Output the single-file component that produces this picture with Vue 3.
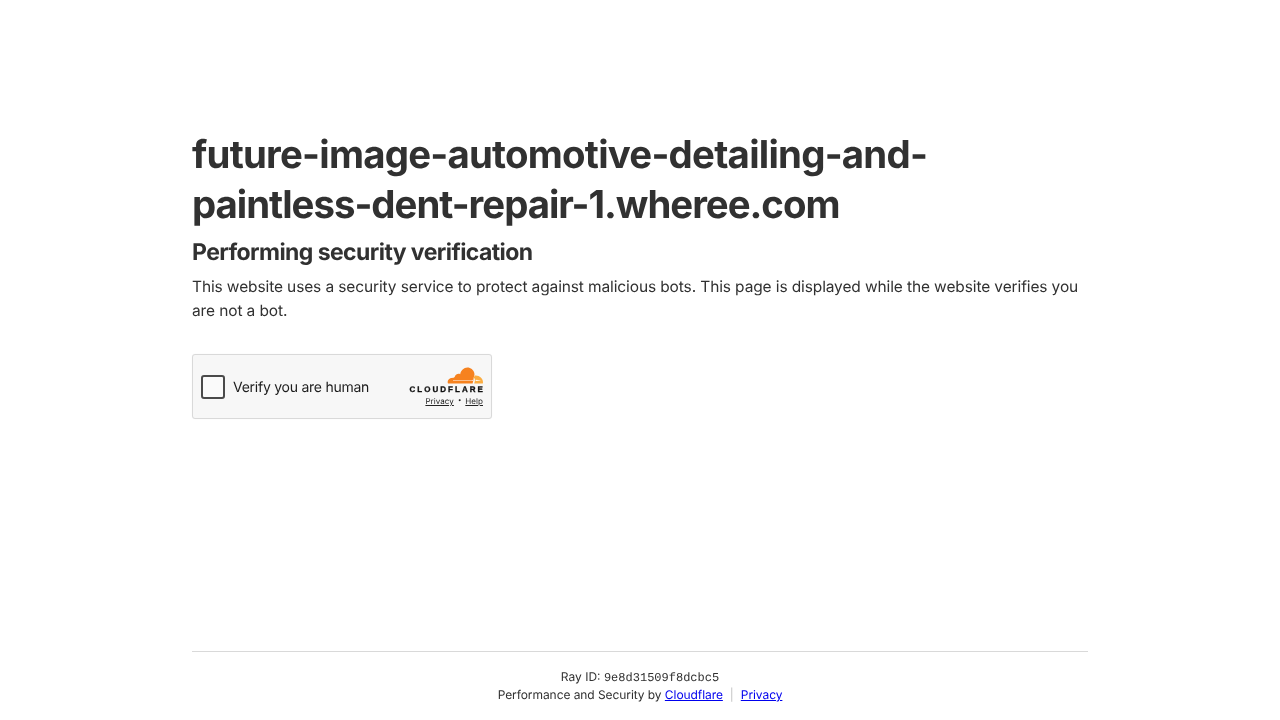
<script setup>
const rayId = '9e8d31509f8dcbc5'
</script>

<template>
  <div class="page">
    <main class="main">
      <h1 class="host">future-image-automotive-detailing-and-<span class="tail">paintless-dent-repair-1.wheree.com</span></h1>
      <h2 class="title">Performing security verification</h2>
      <p class="desc">This website uses a security service to protect against malicious bots. This page is displayed while the website verifies you are not a bot.</p>
      <div class="widget">
        <label class="check">
          <span class="box"></span>
          <span class="verify">Verify you are human</span>
        </label>
        <div class="brand">
          <svg class="cloud" width="37" height="17" viewBox="0 0 37 17">
            <path fill="#f6821f" d="M1 16.5 C.5 15.4 .6 14 1.3 12.9 C2 11.8 3 11 4.2 10.9 L6.6 10.7 C7.2 10.6 7.7 10.2 7.9 9.6 C8.6 7.4 11.2 6.2 13.2 7.2 C13.9 3.6 16.8 .6 20.4 .6 C23.7 .6 26.5 3 27.3 6.1 C27.5 7 27.5 7.8 27.4 8.5 C26.5 10 26.6 13.6 25.6 16.5 Z" />
            <path fill="#fbad41" d="M28 8.6 H28.8 C32.7 8.6 35.9 11.6 36 15.2 C36 15.7 35.9 16.1 35.8 16.5 L27.6 16.5 C27.3 16.5 27.2 16.3 27.3 16.1 L27.8 14.6 C28.2 13.2 28 12.1 27.4 11.3 C27 10.9 26.6 10.6 26.2 10.4 C27 10 27.7 9.4 28 8.6 Z" />
            <path fill="#fff" d="M6 13.6 H24.2 C25 13.6 25.6 13.2 25.6 12.7 L26.1 13.2 C25.8 13.9 25 14.1 24.2 14.1 H6 Z M28.6 12.8 L33.6 13.2 V13.6 L28.6 14.1 Z" />
          </svg>
          <div class="wordmark">CLOUDFLARE</div>
          <div class="terms"><a href="#">Privacy</a><span class="dot">•</span><a href="#">Help</a></div>
        </div>
      </div>
    </main>
    <footer class="footer">
      <div class="ray">Ray ID: <code class="code">{{ rayId }}</code></div>
      <div class="perf">Performance and Security by <a href="#">Cloudflare</a><span class="sep">|</span><a href="#">Privacy</a></div>
    </footer>
  </div>
</template>

<style>
html, body { margin: 0; background: #fff; }
</style>

<style scoped>
.page {
  width: 896px;
  height: 720px;
  margin: 0 auto;
  display: flex;
  flex-direction: column;
  font-family: Inter, "Liberation Sans", sans-serif;
  color: #313131;
  text-rendering: geometricPrecision;
  will-change: transform;
}
.main { flex: 1; padding-top: 130px; }
.host {
  margin: 0;
  font-size: 38.4px;
  line-height: 50px;
  font-weight: 700;
  letter-spacing: -.77px;
  overflow-wrap: break-word;
}
.tail { letter-spacing: -1.02px; }
.title {
  margin: 7px 0 0;
  font-size: 23px;
  line-height: 30px;
  font-weight: 700;
  letter-spacing: -.58px;
}
.desc {
  margin: 8px 0 0;
  font-size: 15.5px;
  line-height: 24px;
  letter-spacing: -.12px;
}
.widget {
  margin-top: 31px;
  width: 300px;
  height: 65px;
  box-sizing: border-box;
  border: 1px solid #d9d9d9;
  border-radius: 3px;
  background: #f7f7f7;
  display: flex;
  justify-content: space-between;
  align-items: center;
  padding: 0 8px;
  box-shadow: 0 0 1px rgba(0, 0, 0, .08);
}
.check { display: flex; align-items: center; gap: 8px; }
.box {
  width: 24px;
  height: 24px;
  box-sizing: border-box;
  border: 2px solid #4a4a4a;
  border-radius: 3px;
  background: #fafafa;
}
.verify { font-size: 14px; color: #1c1c1c; letter-spacing: -.25px; position: relative; top: 1px; }
.brand {
  display: flex;
  flex-direction: column;
  align-items: flex-end;
}
.cloud { display: block; margin-right: -1px; }
.wordmark {
  font-family: "Liberation Sans", sans-serif;
  font-size: 8px;
  line-height: 9px;
  font-weight: 700;
  letter-spacing: 2.05px;
  color: #111;
  margin: 1px -2px 0 0;
  -webkit-text-stroke: .3px #111;
}
.terms {
  display: flex;
  align-items: center;
  margin-top: 2px;
  font-size: 8px;
  line-height: 10px;
  letter-spacing: .06px;
  color: #232323;
}
.terms a { color: #232323; text-decoration: underline; }
.dot { margin: 0 4px; font-size: 6px; }
.footer {
  border-top: 1px solid #d9d9d9;
  padding: 16px 0 0;
  height: 69px;
  box-sizing: border-box;
  text-align: center;
  font-size: 12px;
  line-height: 17px;
  color: #313131;
}
.perf { letter-spacing: -.07px; margin-top: -1px; }
.code { font-family: "Liberation Mono", monospace; font-size: 12px; letter-spacing: 0; }
.footer a { color: #0000ee; text-decoration: underline; }
.sep { color: #c4c4c4; margin: 0 7px; }
</style>
